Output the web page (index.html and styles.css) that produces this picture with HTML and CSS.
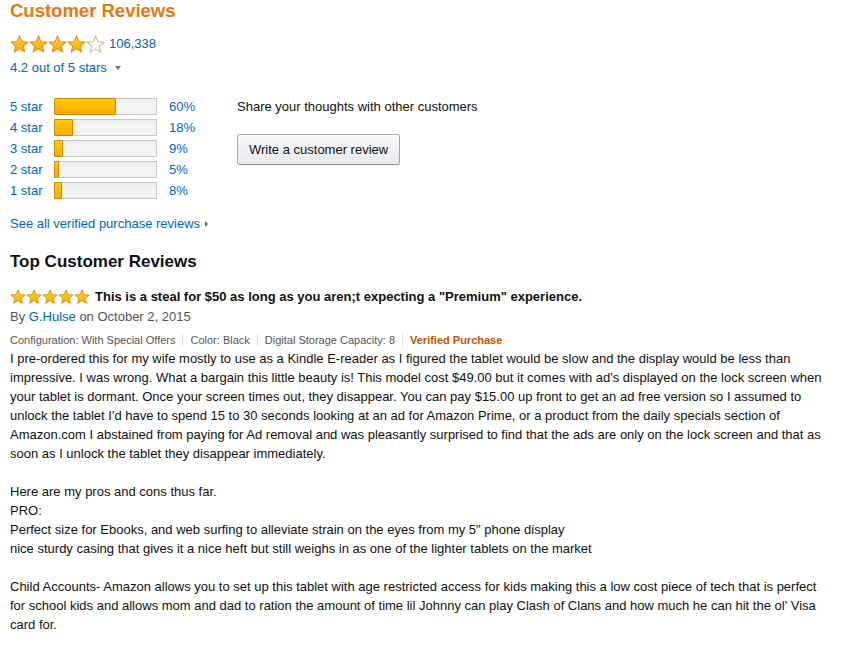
FILE: index.html
```html
<!DOCTYPE html>
<html lang="en">
<head>
<meta charset="utf-8">
<title>Customer Reviews</title>
<link rel="stylesheet" href="styles.css">
</head>
<body>
<svg class="defs" width="0" height="0" aria-hidden="true">
  <defs>
    <linearGradient id="gold" x1="0" y1="0" x2="0" y2="1">
      <stop offset="0" stop-color="#ffd84a"/>
      <stop offset="1" stop-color="#ffa200"/>
    </linearGradient>
    <symbol id="star" viewBox="0 0 20 20">
      <path d="M10 1L12.47 7L18.94 7.5L13.99 11.7L15.53 18L10 14.6L4.47 18L6.01 11.7L1.06 7.5L7.53 7Z" fill="url(#gold)" stroke="#d5930f" stroke-width="1.1" stroke-linejoin="round"/>
    </symbol>
    <symbol id="star-empty" viewBox="0 0 20 20">
      <path d="M10 1L12.47 7L18.94 7.5L13.99 11.7L15.53 18L10 14.6L4.47 18L6.01 11.7L1.06 7.5L7.53 7Z" fill="#fff" stroke="#d6b377" stroke-width="1.1" stroke-linejoin="round"/>
    </symbol>
  </defs>
</svg>

<h1 class="title">Customer Reviews</h1>

<div class="summary">
  <span class="stars stars-lg">
    <svg><use href="#star"/></svg><svg><use href="#star"/></svg><svg><use href="#star"/></svg><svg><use href="#star"/></svg><svg><use href="#star-empty"/></svg>
  </span>
  <a class="link count" href="#">106,338</a>
</div>
<div class="avg"><a class="link" href="#">4.2 out of 5 stars</a><span class="caret"></span></div>

<div class="overview">
  <div class="histogram">
    <div class="hrow"><a class="link hlabel" href="#">5 star</a><div class="meter"><div class="fill" style="width:60%"></div></div><a class="link hpct" href="#">60%</a></div>
    <div class="hrow"><a class="link hlabel" href="#">4 star</a><div class="meter"><div class="fill" style="width:18%"></div></div><a class="link hpct" href="#">18%</a></div>
    <div class="hrow"><a class="link hlabel" href="#">3 star</a><div class="meter"><div class="fill" style="width:9%"></div></div><a class="link hpct" href="#">9%</a></div>
    <div class="hrow"><a class="link hlabel" href="#">2 star</a><div class="meter"><div class="fill" style="width:5%"></div></div><a class="link hpct" href="#">5%</a></div>
    <div class="hrow"><a class="link hlabel" href="#">1 star</a><div class="meter"><div class="fill" style="width:8%"></div></div><a class="link hpct" href="#">8%</a></div>
  </div>
  <div class="share">
    <div class="share-text">Share your thoughts with other customers</div>
    <button class="btn" type="button">Write a customer review</button>
  </div>
</div>

<div class="see-all"><a class="link" href="#">See all verified purchase reviews</a><span class="arrow"></span></div>

<h2 class="section-title">Top Customer Reviews</h2>

<div class="review">
  <div class="review-head">
    <span class="stars stars-sm">
      <svg><use href="#star"/></svg><svg><use href="#star"/></svg><svg><use href="#star"/></svg><svg><use href="#star"/></svg><svg><use href="#star"/></svg>
    </span>
    <span class="review-title">This is a steal for $50 as long as you aren;t expecting a "Premium" experience.</span>
  </div>
  <div class="byline">By <a class="link" href="#">G.Hulse</a> on October 2, 2015</div>
  <div class="meta">
    <span>Configuration: With Special Offers</span><i class="sep"></i><span>Color: Black</span><i class="sep"></i><span>Digital Storage Capacity: 8</span><i class="sep"></i><span class="verified">Verified Purchase</span>
  </div>
  <div class="review-text">I pre-ordered this for my wife mostly to use as a Kindle E-reader as I figured the tablet would be slow and the display would be less than impressive. I was wrong. What a bargain this little beauty is! This model cost $49.00 but it comes with ad's displayed on the lock screen when your tablet is dormant. Once your screen times out, they disappear. You can pay $15.00 up front to get an ad free version so I assumed to unlock the tablet I'd have to spend 15 to 30 seconds looking at an ad for Amazon Prime, or a product from the daily specials section of Amazon.com I abstained from paying for Ad removal and was pleasantly surprised to find that the ads are only on the lock screen and that as soon as I unlock the tablet they disappear immediately.<br><br>Here are my pros and cons thus far.<br>PRO:<br>Perfect size for Ebooks, and web surfing to alleviate strain on the eyes from my 5" phone display<br>nice sturdy casing that gives it a nice heft but still weighs in as one of the lighter tablets on the market<br><br>Child Accounts- Amazon allows you to set up this tablet with age restricted access for kids making this a low cost piece of tech that is perfect for school kids and allows mom and dad to ration the amount of time lil Johnny can play Clash of Clans and how much he can hit the ol' Visa card for.</div>
</div>
</body>
</html>
```

FILE: styles.css
```css
html, body {
  margin: 0;
  padding: 0;
  background: #fff;
}

body {
  padding-left: 10px;
  font-family: "Liberation Sans", Arial, sans-serif;
  font-size: 13px;
  line-height: 19px;
  color: #111;
}

.defs {
  display: block;
  width: 0;
  height: 0;
  overflow: hidden;
}

.link {
  color: #0066c0;
  text-decoration: none;
}

.title {
  margin: 0;
  font-size: 18.5px;
  line-height: 22px;
  font-weight: bold;
  color: #e47911;
}

.summary {
  margin-top: 12px;
  height: 20px;
  display: flex;
  align-items: center;
}

.stars {
  display: inline-flex;
}

.stars-lg svg {
  width: 19px;
  height: 19px;
}

.stars-sm svg {
  width: 16px;
  height: 16px;
}

.count {
  margin-left: 4px;
  line-height: 20px;
}

.avg {
  margin-top: 4px;
  display: flex;
  align-items: center;
}

.caret {
  display: inline-block;
  margin-left: 8px;
  margin-top: 1px;
  width: 0;
  height: 0;
  border-left: 3.5px solid transparent;
  border-right: 3.5px solid transparent;
  border-top: 4px solid #777;
}

.overview {
  margin-top: 19px;
  display: flex;
}

.histogram {
  width: 227px;
}

.hrow {
  display: flex;
  align-items: center;
  height: 21px;
  line-height: 21px;
}

.hlabel {
  width: 44px;
}

.meter {
  width: 103px;
  height: 17px;
  box-sizing: border-box;
  background: linear-gradient(#eaeaea, #f5f5f5 40%, #f3f3f3);
  box-shadow: inset 0 0 0 1px #c9c9c9, inset 0 1px 0 #a8a8a8;
  border-radius: 1px;
  display: flex;
}

.fill {
  height: 100%;
  box-sizing: border-box;
  border: 1px solid #c88b00;
  border-radius: 1px;
  background: linear-gradient(#ffce00, #ffa700);
}

.hpct {
  margin-left: 12px;
}

.share {
  display: flex;
  flex-direction: column;
  align-items: flex-start;
}

.share-text {
  line-height: 21px;
}

.btn {
  margin-top: 17px;
  height: 31px;
  padding: 0 11px;
  font-family: "Liberation Sans", Arial, sans-serif;
  font-size: 13px;
  color: #111;
  background: linear-gradient(#f7f8fa, #e7e9ec);
  border: 1px solid;
  border-color: #adb1b8 #a2a6ac #8d9096;
  border-radius: 3px;
  box-shadow: inset 0 1px 0 rgba(255, 255, 255, 0.6);
}

.see-all {
  margin-top: 13px;
  display: flex;
  align-items: center;
}

.arrow {
  display: inline-block;
  margin-left: 5px;
  width: 0;
  height: 0;
  border-top: 3px solid transparent;
  border-bottom: 3px solid transparent;
  border-left: 3px solid #3b6f9e;
}

.section-title {
  margin: 18px 0 0;
  font-size: 17px;
  line-height: 22px;
  font-weight: bold;
  color: #111;
}

.review {
  margin-top: 14px;
}

.review-head {
  display: flex;
  align-items: center;
  height: 19px;
}

.review-title {
  margin-left: 5px;
  font-weight: bold;
}

.byline {
  margin-top: 1px;
  color: #555;
}

.meta {
  margin-top: 6px;
  font-size: 11px;
  line-height: 16px;
  color: #555;
  display: flex;
  align-items: center;
}

.sep {
  display: inline-block;
  width: 1px;
  height: 12px;
  margin: 0 7px;
  background: #ddd;
}

.verified {
  font-weight: bold;
  color: #c45500;
}

.review-text {
  margin-top: 1px;
  width: 820px;
}
```
